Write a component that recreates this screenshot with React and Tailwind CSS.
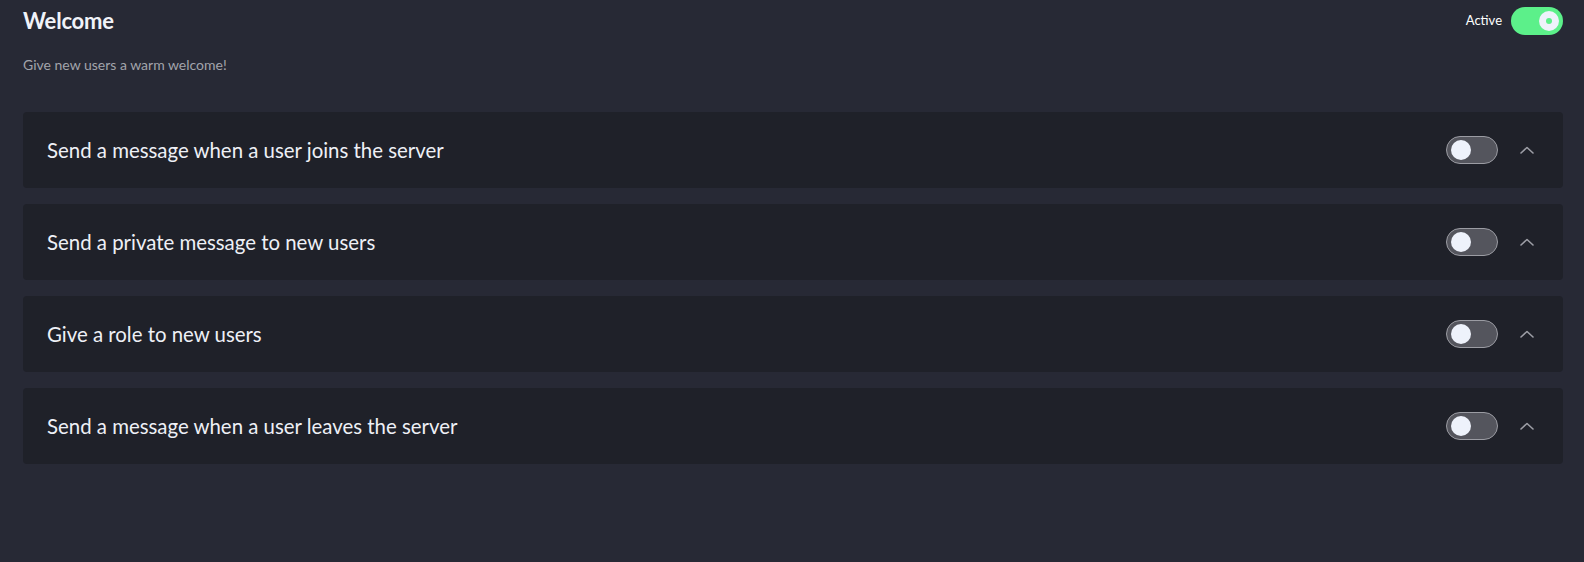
import React, { useState } from 'react';

const items = [
  'Send a message when a user joins the server',
  'Send a private message to new users',
  'Give a role to new users',
  'Send a message when a user leaves the server',
];

const Toggle = ({ on, onClick }) => (
  <button
    onClick={onClick}
    className={
      on
        ? 'relative w-[52px] h-[28px] rounded-full bg-[#5cf08a] flex items-center'
        : 'relative w-[52px] h-[28px] rounded-full bg-[#54555d] border border-[#9b9ca3] flex items-center'
    }
  >
    {on ? (
      <span className="absolute right-[4px] w-[20px] h-[20px] rounded-full bg-[#eef2fb] flex items-center justify-center">
        <span className="w-[6px] h-[6px] rounded-full bg-[#5cf08a]" />
      </span>
    ) : (
      <span className="absolute left-[4px] w-[20px] h-[20px] rounded-full bg-[#eef2fb]" />
    )}
  </button>
);

const Chevron = () => (
  <svg width="14" height="8" viewBox="0 0 14 8" fill="none">
    <path d="M1 7L7 1.5L13 7" stroke="#9d9ea6" strokeWidth="1.6" strokeLinecap="round" strokeLinejoin="round" />
  </svg>
);

const App = () => {
  const [active, setActive] = useState(true);
  const [opts, setOpts] = useState([false, false, false, false]);

  return (
    <div className="min-h-[562px] bg-[#272935] pl-[23px] pr-[21px] font-['Lato',sans-serif] text-[#eef0f6]">
      <div className="flex justify-between items-center pt-[7px]">
        <h1 className="text-[22px] font-bold leading-[28px] tracking-[-0.2px] text-[#f1f3f9]">Welcome</h1>
        <div className="flex items-center gap-[9px]">
          <span className="text-[13px] text-white">Active</span>
          <Toggle on={active} onClick={() => setActive(!active)} />
        </div>
      </div>
      <p className="mt-[21px] text-[14px] leading-[17px] text-[#a2a4ab]">Give new users a warm welcome!</p>

      <div className="mt-[39px] flex flex-col gap-[16px]">
        {items.map((label, i) => (
          <div key={label} className="h-[76px] rounded-[4px] bg-[#1f2129] flex items-center pl-[24px] pr-[29px]">
            <span className="flex-1 text-[20.4px] text-[#eef0f6]">{label}</span>
            <Toggle on={opts[i]} onClick={() => setOpts(opts.map((v, j) => (j === i ? !v : v)))} />
            <span className="ml-[22px] flex items-center">
              <Chevron />
            </span>
          </div>
        ))}
      </div>
    </div>
  );
};

export default App;
